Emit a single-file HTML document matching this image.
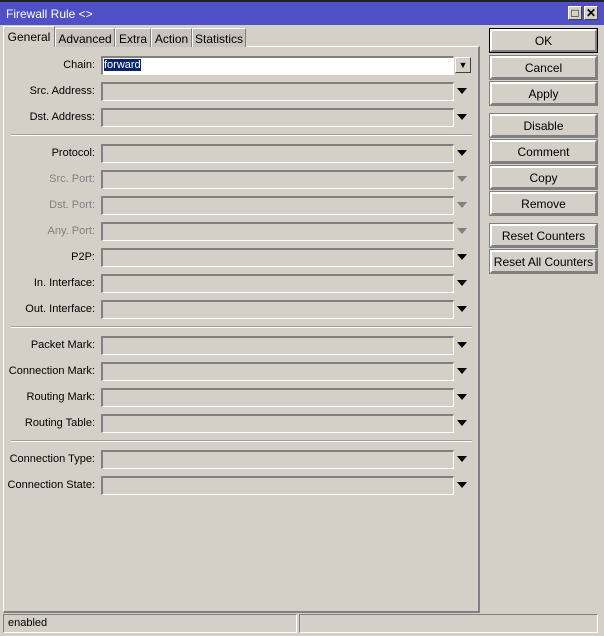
<!DOCTYPE html>
<html><head><style>
*{margin:0;padding:0;box-sizing:border-box}
body{width:604px;height:636px;background:#d4d0c8;font-family:"Liberation Sans",sans-serif;font-size:11px;color:#000;position:relative;overflow:hidden}
.a{position:absolute}
.tb{left:0;top:0;width:604px;height:25px;background:#4f4fc8;border-top:2px solid #222;color:#fff;font-size:12px;padding:5px 0 0 6px}
.wb{top:6px;width:14px;height:14px;background:#d4d0c8;border:1px solid #fff;border-right-color:#404040;border-bottom-color:#404040;font-size:12px;font-weight:bold;line-height:12px;text-align:center;color:#000}
.tab{top:28px;height:19px;border:1px solid #fff;border-bottom:none;border-right-color:#808080;background:#c8c4bc;padding:3px 0 0 0;text-align:center;font-size:12px}
.panel{left:3px;top:46px;width:477px;height:567px;border:1px solid #fff;border-right:2px solid #808080;border-bottom:2px solid #808080}
.lbl{width:92px;text-align:right;font-size:11px;left:3px}
.in{left:101px;width:353px;height:19px;border:1px solid #808080;border-right-color:#fff;border-bottom-color:#fff;border-top:2px solid #808080;border-left:2px solid #808080}
.arr{left:457px;width:0;height:0;border-left:5px solid transparent;border-right:5px solid transparent;border-top:6px solid #000}
.dis{color:#808080}
.arr.dis{border-top-color:#808080}
.sep{left:11px;width:461px;height:2px;border-top:1px solid #a0a0a0;border-bottom:1px solid #fff}
.btn{left:490px;width:107px;height:23px;border:2px solid #fff;border-right-color:#808080;border-bottom-color:#808080;outline:1px solid #808080;text-align:center;font-size:12px;padding-top:3px}
.st{top:614px;height:19px;border:1px solid #808080;border-right-color:#fff;border-bottom-color:#fff;padding:2px 0 0 4px;font-size:11px}
</style></head><body>
<div class="a tb">Firewall Rule &lt;&gt;</div>
<div class="a wb" style="left:568px">□</div>
<div class="a wb" style="left:584px">✕</div>
<div class="a panel"></div>
<div class="a tab" style="left:3px;top:26px;height:21px;width:52px;background:#d4d0c8;z-index:2">General</div>
<div class="a tab" style="left:55px;width:60px">Advanced</div>
<div class="a tab" style="left:115px;width:36px">Extra</div>
<div class="a tab" style="left:151px;width:41px">Action</div>
<div class="a tab" style="left:192px;width:54px">Statistics</div>

<div class="a lbl" style="top:59px">Chain:</div>
<div class="a in" style="top:56px;background:#fff;padding:1px 0 0 1px"><span style="background:#0a246a;color:#fff;font-size:11px">forward</span></div>
<div class="a" style="left:455px;top:57px;width:16px;height:16px;border:1px solid #fff;border-right-color:#404040;border-bottom-color:#404040;font-size:9px;text-align:center;line-height:14px">▼</div>

<div class="a lbl" style="top:85px">Src. Address:</div><div class="a in" style="top:82px"></div><div class="a arr" style="top:88px"></div>
<div class="a lbl" style="top:111px">Dst. Address:</div><div class="a in" style="top:108px"></div><div class="a arr" style="top:114px"></div>
<div class="a sep" style="top:134px"></div>
<div class="a lbl" style="top:147px">Protocol:</div><div class="a in" style="top:144px"></div><div class="a arr" style="top:150px"></div>
<div class="a lbl dis" style="top:173px">Src. Port:</div><div class="a in" style="top:170px"></div><div class="a arr dis" style="top:176px"></div>
<div class="a lbl dis" style="top:199px">Dst. Port:</div><div class="a in" style="top:196px"></div><div class="a arr dis" style="top:202px"></div>
<div class="a lbl dis" style="top:225px">Any. Port:</div><div class="a in" style="top:222px"></div><div class="a arr dis" style="top:228px"></div>
<div class="a lbl" style="top:251px">P2P:</div><div class="a in" style="top:248px"></div><div class="a arr" style="top:254px"></div>
<div class="a lbl" style="top:277px">In. Interface:</div><div class="a in" style="top:274px"></div><div class="a arr" style="top:280px"></div>
<div class="a lbl" style="top:303px">Out. Interface:</div><div class="a in" style="top:300px"></div><div class="a arr" style="top:306px"></div>
<div class="a sep" style="top:326px"></div>
<div class="a lbl" style="top:339px">Packet Mark:</div><div class="a in" style="top:336px"></div><div class="a arr" style="top:342px"></div>
<div class="a lbl" style="top:365px">Connection Mark:</div><div class="a in" style="top:362px"></div><div class="a arr" style="top:368px"></div>
<div class="a lbl" style="top:391px">Routing Mark:</div><div class="a in" style="top:388px"></div><div class="a arr" style="top:394px"></div>
<div class="a lbl" style="top:417px">Routing Table:</div><div class="a in" style="top:414px"></div><div class="a arr" style="top:420px"></div>
<div class="a sep" style="top:440px"></div>
<div class="a lbl" style="top:453px">Connection Type:</div><div class="a in" style="top:450px"></div><div class="a arr" style="top:456px"></div>
<div class="a lbl" style="top:479px">Connection State:</div><div class="a in" style="top:476px"></div><div class="a arr" style="top:482px"></div>

<div class="a btn" style="top:29px;outline:1px solid #000">OK</div>
<div class="a btn" style="top:56px">Cancel</div>
<div class="a btn" style="top:82px">Apply</div>
<div class="a btn" style="top:114px">Disable</div>
<div class="a btn" style="top:140px">Comment</div>
<div class="a btn" style="top:166px">Copy</div>
<div class="a btn" style="top:192px">Remove</div>
<div class="a btn" style="top:224px">Reset Counters</div>
<div class="a btn" style="top:250px">Reset All Counters</div>

<div class="a st" style="left:3px;width:294px">enabled</div>
<div class="a st" style="left:299px;width:299px"></div>
</body></html>
